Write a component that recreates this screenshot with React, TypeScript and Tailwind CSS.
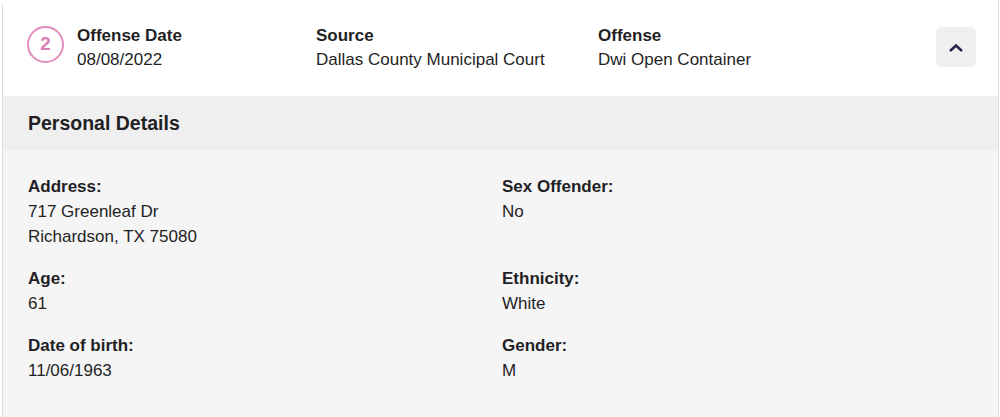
import React from "react";

const Field = ({ label, lines }: { label: string; lines: string[] }) => (
  <div>
    <div className="font-bold text-[17px] leading-[25px] text-[#1f1f24]">{label}</div>
    {lines.map((l) => (
      <div key={l} className="text-[17px] leading-[25px] text-[#1f1f24]">
        {l}
      </div>
    ))}
  </div>
);

export default function App() {
  return (
    <div
      className="w-[1000px] h-[417px] bg-white overflow-hidden"
      style={{ fontFamily: '"Liberation Sans", Arial, sans-serif' }}
    >
      <div className="ml-[2px] mr-[1px] h-full border-x border-[#dcdcdc] rounded-tl-md flex flex-col">
        {/* header row */}
        <div className="h-[96px] bg-white flex items-start pl-[24px] pr-[22px] pt-[24px]">
          <div className="w-[37px] h-[37px] mt-[2px] rounded-full border-2 border-[#e08cbc] flex items-center justify-center text-[#d97fb3] text-[19px] font-semibold">
            2
          </div>
          <div className="ml-[13px] w-[239px]">
            <div className="font-bold text-[17px] leading-[23px] text-[#1f1f24]">Offense Date</div>
            <div className="text-[17px] leading-[25px] text-[#1f1f24]">08/08/2022</div>
          </div>
          <div className="w-[282px]">
            <div className="font-bold text-[17px] leading-[23px] text-[#1f1f24]">Source</div>
            <div className="text-[17px] leading-[25px] text-[#1f1f24]">Dallas County Municipal Court</div>
          </div>
          <div className="flex-1">
            <div className="font-bold text-[17px] leading-[23px] text-[#1f1f24]">Offense</div>
            <div className="text-[17px] leading-[25px] text-[#1f1f24]">Dwi Open Container</div>
          </div>
          <button className="w-[40px] h-[40px] mt-[3px] rounded-md bg-[#efefef] flex items-center justify-center">
            <svg width="16" height="10" viewBox="0 0 16 10" fill="none" className="mt-[1px]">
              <path d="M2 8 L8 2.5 L14 8" stroke="#25244a" strokeWidth="2.6" />
            </svg>
          </button>
        </div>

        {/* section title */}
        <div className="h-[54px] bg-[#efefef] flex items-center pl-[25px]">
          <div className="font-bold text-[19.5px] text-[#1f1f24] mt-[1px]">Personal Details</div>
        </div>

        {/* details */}
        <div className="flex-1 bg-[#f5f5f6] pl-[25px] pt-[24px] grid grid-cols-[474px_1fr] gap-y-[17px] content-start">
          <Field label="Address:" lines={["717 Greenleaf Dr", "Richardson, TX 75080"]} />
          <Field label="Sex Offender:" lines={["No"]} />
          <Field label="Age:" lines={["61"]} />
          <Field label="Ethnicity:" lines={["White"]} />
          <Field label="Date of birth:" lines={["11/06/1963"]} />
          <Field label="Gender:" lines={["M"]} />
        </div>
      </div>
    </div>
  );
}
